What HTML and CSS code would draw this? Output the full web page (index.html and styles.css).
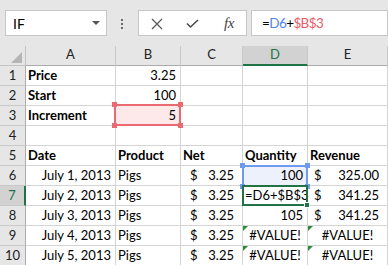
FILE: index.html
```html
<!DOCTYPE html>
<html>
<head>
<meta charset="utf-8">
<link rel="stylesheet" href="styles.css">
</head>
<body>
<div class="fbar">
  <div class="namebox"><span>IF</span><span class="nb-arrow"></span></div>
  <div class="grip"><i></i><i></i><i></i></div>
  <div class="btns">
    <svg class="ic-x" width="12" height="12" viewBox="0 0 12 12"><path d="M1 1L11 11M11 1L1 11" stroke="#5a5a5a" stroke-width="1.3" fill="none"/></svg>
    <svg class="ic-ok" width="13" height="10" viewBox="0 0 13 10"><path d="M1 4.5L4.5 8L12 1" stroke="#4a4a4a" stroke-width="1.6" fill="none"/></svg>
    <span class="fx">fx</span>
  </div>
  <div class="formula"><span>=</span><span class="ref-blue">D6</span><span>+</span><span class="ref-red">$B$3</span></div>
</div>
<div class="sheet">
  <div class="c corner"></div><div class="c ch">A</div><div class="c ch">B</div><div class="c ch">C</div><div class="c ch ch-sel">D</div><div class="c ch">E</div>

  <div class="c rh">1</div><div class="c b">Price</div><div class="c r">3.25</div><div class="c"></div><div class="c"></div><div class="c"></div>

  <div class="c rh">2</div><div class="c b">Start</div><div class="c r">100</div><div class="c"></div><div class="c"></div><div class="c"></div>

  <div class="c rh">3</div><div class="c b">Increment</div><div class="c r ref-cell-red">5<span class="box-red"><i class="h tl"></i><i class="h tr"></i><i class="h bl"></i><i class="h br"></i></span></div><div class="c"></div><div class="c"></div><div class="c"></div>

  <div class="c rh">4</div><div class="c"></div><div class="c"></div><div class="c"></div><div class="c"></div><div class="c"></div>

  <div class="c rh">5</div><div class="c b">Date</div><div class="c b">Product</div><div class="c b">Net</div><div class="c b">Quantity</div><div class="c b">Revenue</div>

  <div class="c rh">6</div><div class="c r">July 1, 2013</div><div class="c">Pigs</div><div class="c acc acc-c"><span>$</span><span>3.25</span></div><div class="c r ref-cell-blue">100<span class="box-blue"><i class="h tl"></i><i class="h tr"></i><i class="h bl"></i><i class="h br"></i></span></div><div class="c acc acc-e"><span>$</span><span>325.00</span></div>

  <div class="c rh rh-sel">7</div><div class="c r">July 2, 2013</div><div class="c">Pigs</div><div class="c acc acc-c"><span>$</span><span>3.25</span></div><div class="c edit">=D6+$B$3<span class="box-green"><i class="fill"></i></span></div><div class="c acc acc-e"><span>$</span><span>341.25</span></div>

  <div class="c rh">8</div><div class="c r">July 3, 2013</div><div class="c">Pigs</div><div class="c acc acc-c"><span>$</span><span>3.25</span></div><div class="c r">105</div><div class="c acc acc-e"><span>$</span><span>341.25</span></div>

  <div class="c rh">9</div><div class="c r">July 4, 2013</div><div class="c">Pigs</div><div class="c acc acc-c"><span>$</span><span>3.25</span></div><div class="c ctr err">#VALUE!</div><div class="c ctr err">#VALUE!</div>

  <div class="c rh">10</div><div class="c r">July 5, 2013</div><div class="c">Pigs</div><div class="c acc acc-c"><span>$</span><span>3.25</span></div><div class="c ctr err">#VALUE!</div><div class="c ctr err">#VALUE!</div>
</div>
</body>
</html>
```

FILE: styles.css
```css
* { box-sizing: border-box; margin: 0; padding: 0; }
html, body { margin: 0; background: #fff; }
body {
  width: 388px;
  height: 265px;
  overflow: hidden;
  font-family: Lato, "Liberation Sans", sans-serif;
  color: #000;
}

/* formula bar */
.fbar {
  height: 46px;
  background: #e6e6e6;
  display: flex;
  align-items: flex-start;
  padding: 10px 0 0 5px;
}
.namebox {
  width: 102px;
  height: 26px;
  background: #fff;
  border: 1px solid #c6c6c6;
  display: flex;
  align-items: center;
  padding-left: 7px;
  font-size: 14px;
}
.nb-arrow {
  margin-left: auto;
  margin-right: 6px;
  width: 0;
  height: 0;
  border-left: 4px solid transparent;
  border-right: 4px solid transparent;
  border-top: 4px solid #555;
}
.grip {
  margin-left: 14px;
  padding-top: 9px;
  display: flex;
  flex-direction: column;
  gap: 2px;
}
.grip i {
  display: block;
  width: 2px;
  height: 2px;
  background: #6a6a6a;
}
.btns {
  margin-left: 15px;
  width: 109px;
  height: 26px;
  background: #fff;
  border: 1px solid #c6c6c6;
  display: flex;
  align-items: center;
  padding-left: 12px;
}
.ic-x { margin-top: 1px; }
.ic-ok { margin-left: 23px; margin-top: 2px; }
.fx {
  margin-left: 25px;
  font-family: "Liberation Serif", serif;
  font-style: italic;
  font-size: 15px;
  color: #444;
  letter-spacing: -0.5px;
}
.formula {
  margin-left: 4px;
  width: 137px;
  height: 26px;
  background: #fff;
  border: 1px solid #c6c6c6;
  padding-left: 10px;
  font-size: 13.5px;
  letter-spacing: -0.6px;
  line-height: 24px;
}
.ref-blue { color: #4f86ec; }
.ref-red { color: #ec5a66; }

/* sheet */
.sheet {
  display: grid;
  grid-template-columns: 26px 90px 65px 62px 65px 80px;
  grid-template-rows: repeat(11, 20px);
}
.c {
  border-right: 1px solid #d4d4d4;
  border-bottom: 1px solid #d4d4d4;
  font-size: 13px;
  line-height: 19px;
  padding: 0 4px 0 2px;
  white-space: nowrap;
  background: #fff;
}
.corner {
  background: #e6e6e6;
  border-color: #c4c4c4;
  position: relative;
}
.corner::after {
  content: "";
  position: absolute;
  right: 3px;
  bottom: 2px;
  width: 0;
  height: 0;
  border-left: 11px solid transparent;
  border-bottom: 11px solid #b5b5b5;
}
.ch {
  background: #e6e6e6;
  border-right-color: #c9c9c9;
  border-bottom-color: #ababab;
  text-align: center;
  color: #222;
  line-height: 17px;
  padding: 0;
}
.ch-sel {
  background: #d2d2d2;
  color: #217346;
  border-bottom: 2px solid #217346;
}
.rh {
  background: #e6e6e6;
  border-right-color: #ababab;
  border-bottom-color: #c9c9c9;
  text-align: center;
  color: #222;
  padding: 0;
}
.rh-sel {
  background: #d2d2d2;
  color: #217346;
  border-right: 2px solid #217346;
}
.b { font-weight: bold; }
.r { text-align: right; }
.ctr { text-align: center; padding: 0; }
.acc {
  display: flex;
  justify-content: space-between;
  padding-right: 8px;
}
.acc-c { padding-left: 9px; }
.acc-e { padding-left: 6px; }

/* reference / selection overlays */
.ref-cell-red { position: relative; background: #fde9ea; }
.ref-cell-blue { position: relative; background: #edf1fc; }
.box-red, .box-blue, .box-green {
  position: absolute;
  left: -2px;
  top: -2px;
  width: 67px;
  height: 22px;
  border: 2px solid #ea6a72;
}
.box-blue {
  left: -1px;
  top: -1px;
  width: 66px;
  border-color: #6f9af0;
}
.box-red .h, .box-blue .h {
  position: absolute;
  width: 5px;
  height: 5px;
  background: #ea6a72;
}
.box-blue .h { background: #6f9af0; }
.h.tl { left: -4px; top: -4px; }
.h.tr { right: -4px; top: -4px; }
.h.bl { left: -4px; bottom: -4px; }
.h.br { right: -4px; bottom: -4px; }

.edit { position: relative; padding-left: 2px; }
.box-green {
  left: -1px;
  top: -1px;
  width: 66px;
  height: 21px;
  border-color: #217346;
}
.fill {
  position: absolute;
  right: -4px;
  bottom: -4px;
  width: 6px;
  height: 6px;
  background: #217346;
  border: 1px solid #fff;
}
.err { position: relative; }
.err::before {
  content: "";
  position: absolute;
  left: 0;
  top: 0;
  width: 0;
  height: 0;
  border-top: 5px solid #2a8a3e;
  border-right: 5px solid transparent;
}
```
